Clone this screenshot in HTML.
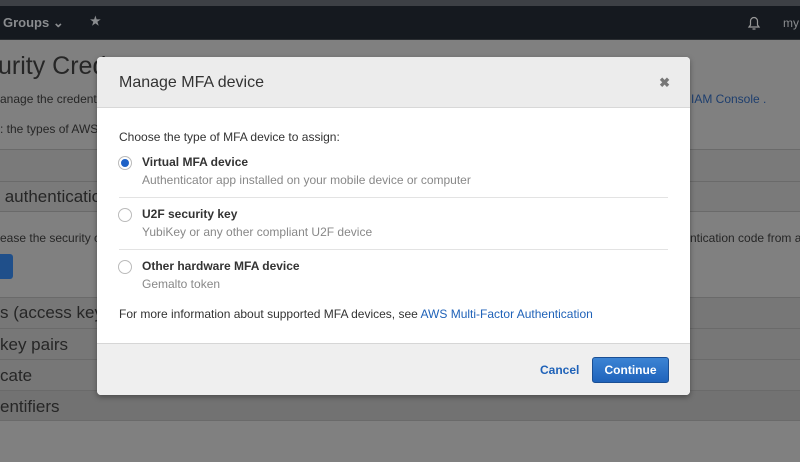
<!DOCTYPE html>
<html><head><style>
*{margin:0;padding:0;box-sizing:border-box}
html,body{width:800px;height:462px;overflow:hidden;background:#7f7f7f}
body{font-family:"Liberation Sans",sans-serif;position:relative}
.bg{position:absolute;left:0;top:0;width:800px;height:462px;background:#808080}
.top{position:absolute;left:0;top:0;width:800px;height:6px;background:#3d4045}
.nav{position:absolute;left:0;top:6px;width:800px;height:34px;background:#15191f;border-bottom:1px solid #2a2d31}
.nav span{position:absolute;color:#8a8c8f;font-size:13px;font-weight:bold}
.a{position:absolute;color:#262626;white-space:nowrap}
.row{position:absolute;left:0;width:800px;border-top:1px solid #6a6a6a}
.modal{position:absolute;left:97px;top:57px;width:593px;height:338px;background:#fff;border-radius:4px;box-shadow:0 2px 6px rgba(0,0,0,.35);overflow:hidden}
.mh{height:51px;background:#ececec;border-bottom:1px solid #d8d8d8;position:relative}
.mh h1{position:absolute;left:22px;top:17px;font-size:16px;font-weight:normal;color:#333}
.x{position:absolute;right:20px;top:18px;font-size:13px;font-weight:bold;color:#777}
.t{position:absolute;font-size:12px;color:#333;white-space:nowrap}
.b{font-weight:bold}
.g{color:#888}
.rad{position:absolute;left:21px;width:14px;height:14px;border-radius:50%;border:1px solid #bbb;background:#fff}
.sep{position:absolute;left:22px;width:549px;height:1px;background:#e3e3e3}
.mf{position:absolute;left:0;top:286px;width:593px;height:52px;background:#efefef;border-top:1px solid #d6d6d6}
.btn{position:absolute;left:495px;top:13px;width:77px;height:26px;background:linear-gradient(#3c84d4,#1f63bb);border:1px solid #1a4f94;border-radius:3px;color:#fff;font-size:12px;font-weight:bold;text-align:center;line-height:24px}
</style></head><body>
<div class="bg"></div>
<div class="top"></div>
<div class="nav">
<span style="left:3px;top:9px">Groups &#8964;</span>
<span style="left:90px;top:8px;font-size:12px">&#9733;</span>
<svg style="position:absolute;left:747px;top:9px" width="14" height="16" viewBox="0 0 14 16"><path d="M2 12h10l-1.5-2V6a3.5 3.5 0 0 0-7 0v4zM5.5 14h3" fill="none" stroke="#999" stroke-width="1.2"/></svg>
<span style="left:783px;top:10px;font-weight:normal;font-size:12px">my</span>
</div>
<div class="a" style="left:-2px;top:52px;font-size:25px">urity Crede</div>
<div class="a" style="left:0;top:92px;font-size:12px">anage the credenti</div>
<div class="a" style="left:691px;top:92px;font-size:12px;color:#1d3e6e">IAM Console .</div>
<div class="a" style="left:0;top:122px;font-size:12px">: the types of AWS</div>
<div class="row" style="top:149px;height:32px;background:#7a7a7a"></div>
<div class="row" style="top:181px;height:31px;background:#7a7a7a;border-bottom:1px solid #6a6a6a"></div>
<div class="a" style="left:0;top:187px;font-size:17px">&nbsp;authentication</div>
<div class="a" style="left:0;top:231px;font-size:12px">ease the security c</div>
<div class="a" style="left:690px;top:231px;font-size:12px">ntication code from a</div>
<div style="position:absolute;left:-4px;top:254px;width:17px;height:25px;background:#1f4f8a;border-radius:3px"></div>
<div class="row" style="top:297px;height:31px;background:#777"></div>
<div class="row" style="top:328px;height:31px;background:#777"></div>
<div class="row" style="top:359px;height:31px;background:#777"></div>
<div class="row" style="top:390px;height:31px;background:#727272;border-bottom:1px solid #6a6a6a"></div>
<div class="a" style="left:0;top:303px;font-size:17px">s (access key I</div>
<div class="a" style="left:0;top:335px;font-size:17px">key pairs</div>
<div class="a" style="left:0;top:366px;font-size:17px">cate</div>
<div class="a" style="left:0;top:397px;font-size:17px">entifiers</div>
<div class="modal">
<div class="mh"><h1>Manage MFA device</h1><div class="x">&#10006;</div></div>
<div class="t" style="left:22px;top:73px">Choose the type of MFA device to assign:</div>
<div class="rad" style="top:99px"><div style="position:absolute;left:2px;top:2px;width:8px;height:8px;border-radius:50%;background:#1f62c7"></div></div>
<div class="t b" style="left:45px;top:98px">Virtual MFA device</div>
<div class="t g" style="left:45px;top:116px">Authenticator app installed on your mobile device or computer</div>
<div class="sep" style="top:140px"></div>
<div class="rad" style="top:151px"></div>
<div class="t b" style="left:45px;top:150px">U2F security key</div>
<div class="t g" style="left:45px;top:168px">YubiKey or any other compliant U2F device</div>
<div class="sep" style="top:192px"></div>
<div class="rad" style="top:203px"></div>
<div class="t b" style="left:45px;top:202px">Other hardware MFA device</div>
<div class="t g" style="left:45px;top:220px">Gemalto token</div>
<div class="t" style="left:22px;top:250px">For more information about supported MFA devices, see <span style="color:#1f62b8">AWS Multi-Factor Authentication</span></div>
<div class="mf">
<div class="t b" style="left:443px;top:19px;color:#1f62b8">Cancel</div>
<div class="btn">Continue</div>
</div>
</div>
</body></html>
